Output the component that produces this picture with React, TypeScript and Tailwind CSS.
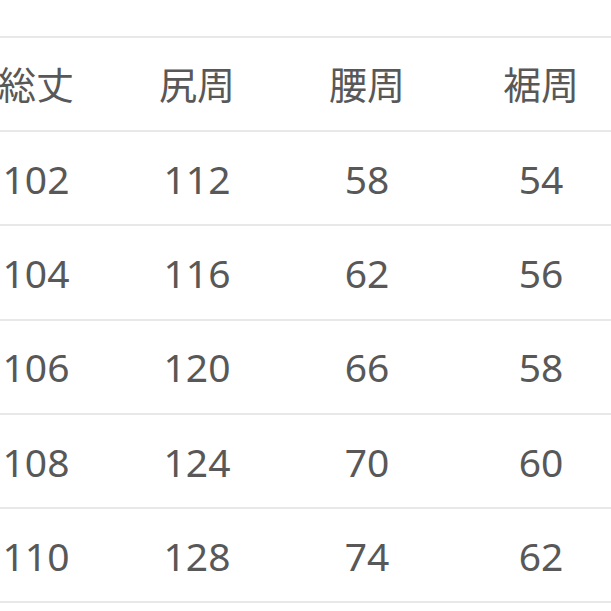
const headers = ['総丈', '尻周', '腰周', '裾周'];

const rows = [
  ['102', '112', '58', '54'],
  ['104', '116', '62', '56'],
  ['106', '120', '66', '58'],
  ['108', '124', '70', '60'],
  ['110', '128', '74', '62'],
];

const App = () => {
  return (
    <div
      className="w-[611px] h-[611px] overflow-hidden bg-white text-[#585858]"
      style={{ fontFamily: '"Noto Sans", "Noto Sans CJK JP", sans-serif' }}
    >
      <div className="pt-[36px] -ml-[44px] w-[680px]">
        {/* Header */}
        <div className="grid grid-cols-[160px_162px_178px_170px] items-center h-[96px] border-y-[2.5px] border-[#e8e8e8] text-[38px] leading-none">
          {headers.map((h) => (
            <div key={h} className="text-center">
              {h}
            </div>
          ))}
        </div>

        {/* Rows */}
        {rows.map((row) => (
          <div
            key={row[0]}
            className="grid grid-cols-[160px_162px_178px_170px] items-center h-[94.3px] border-b-[2.5px] border-[#e8e8e8] text-[39px] leading-none"
          >
            {row.map((v, i) => (
              <div key={i} className="text-center">
                {v}
              </div>
            ))}
          </div>
        ))}
      </div>
    </div>
  );
};

export default App;
